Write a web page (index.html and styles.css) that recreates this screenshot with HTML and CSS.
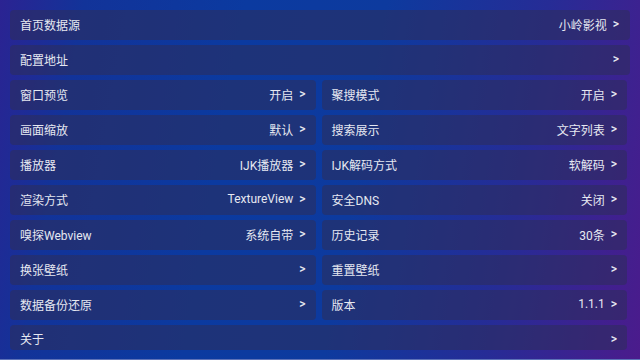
FILE: index.html
```html
<!DOCTYPE html>
<html lang="zh-CN">
<head>
    <meta charset="UTF-8">
    <meta name="viewport" content="width=device-width, initial-scale=1.0">
    <title>设置</title>
    <link rel="stylesheet" href="styles.css">
</head>
<body>
    <div class="page">
        <div class="settings">
            <div class="item full wide"><span>首页数据源</span><span class="value">小岭影视<i class="arrow">&gt;</i></span></div>
            <div class="item full wide"><span>配置地址</span><span class="value"><i class="arrow">&gt;</i></span></div>

            <div class="item"><span>窗口预览</span><span class="value">开启<i class="arrow">&gt;</i></span></div>
            <div class="item"><span>聚搜模式</span><span class="value">开启<i class="arrow">&gt;</i></span></div>

            <div class="item"><span>画面缩放</span><span class="value">默认<i class="arrow">&gt;</i></span></div>
            <div class="item"><span>搜索展示</span><span class="value">文字列表<i class="arrow">&gt;</i></span></div>

            <div class="item"><span>播放器</span><span class="value">IJK播放器<i class="arrow">&gt;</i></span></div>
            <div class="item"><span>IJK解码方式</span><span class="value">软解码<i class="arrow">&gt;</i></span></div>

            <div class="item"><span>渲染方式</span><span class="value">TextureView<i class="arrow">&gt;</i></span></div>
            <div class="item"><span>安全DNS</span><span class="value">关闭<i class="arrow">&gt;</i></span></div>

            <div class="item"><span>嗅探Webview</span><span class="value">系统自带<i class="arrow">&gt;</i></span></div>
            <div class="item"><span>历史记录</span><span class="value">30条<i class="arrow">&gt;</i></span></div>

            <div class="item"><span>换张壁纸</span><span class="value"><i class="arrow">&gt;</i></span></div>
            <div class="item"><span>重置壁纸</span><span class="value"><i class="arrow">&gt;</i></span></div>

            <div class="item"><span>数据备份还原</span><span class="value"><i class="arrow">&gt;</i></span></div>
            <div class="item"><span>版本</span><span class="value">1.1.1<i class="arrow">&gt;</i></span></div>

            <div class="item full last"><span>关于</span><span class="value"><i class="arrow">&gt;</i></span></div>
        </div>
        <div class="edge"></div>
    </div>
</body>
</html>
```

FILE: styles.css
```css
html, body {
    margin: 0;
    height: 100%;
}
body {
    font-family: Roboto, "Noto Sans CJK SC", sans-serif;
    font-size: 12px;
    color: #e6e8f1;
    background: linear-gradient(100deg, #2b2392 0%, #123399 12%, #0b3aa0 35%, #0d3a9e 55%, #262c96 78%, #4b1b8c 100%);
    overflow: hidden;
}
.page {
    height: 360px;
    display: flex;
    flex-direction: column;
}
.settings {
    display: grid;
    grid-template-columns: 1fr 1fr;
    column-gap: 6px;
    row-gap: 5px;
    padding: 10px 13px 0 10px;
}
.item {
    box-sizing: border-box;
    height: 30px;
    display: flex;
    align-items: center;
    justify-content: space-between;
    padding: 0 10px 2px;
    border-radius: 4px;
    background-color: rgba(45, 45, 90, 0.55);
}
.full {
    grid-column: 1 / 3;
}
.wide {
    margin-right: -3px;
    padding-right: 11px;
}
.last {
    height: 25px;
    padding-top: 2px;
    padding-bottom: 0;
}
.value {
    display: flex;
    align-items: center;
}
.arrow {
    font-style: normal;
    font-weight: 500;
    margin-left: 6px;
}
.edge {
    margin-top: auto;
    height: 1px;
    background-color: #5d72b8;
}
```
